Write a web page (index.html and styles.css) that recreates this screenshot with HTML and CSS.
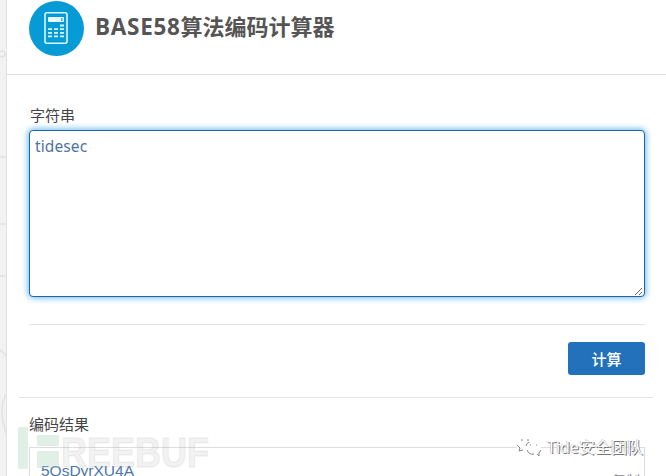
FILE: index.html
```html
<!DOCTYPE html>
<html lang="zh-CN">
<head>
<meta charset="utf-8">
<title>BASE58算法编码计算器</title>
<link rel="stylesheet" href="styles.css">
</head>
<body>
<div class="page">
  <aside class="rail">
    <svg width="7" height="476" viewBox="0 0 7 476" fill="none" stroke="#e2e2e2" stroke-width="1.5">
      <circle cx="2" cy="54" r="3"/><path d="M0 157h7M0 224h7M0 276h7M0 350q4 2 7 8M7 393q-5 8-5 18t5 26"/>
    </svg>
  </aside>
  <main class="panel">
    <header class="head">
      <svg class="logo" width="55" height="55" viewBox="0 0 55 55">
        <circle cx="27.5" cy="27.5" r="27.5" fill="#069bd5"/>
        <rect x="16" y="11.8" width="22" height="30.5" rx="2" fill="none" stroke="#d9f8ff" stroke-width="1.6"/>
        <rect x="19" y="16" width="16" height="5" rx="1" fill="#e8fbff"/>
        <path d="M32.8 17v3" stroke="#069bd5" stroke-width="1.2"/>
        <path d="M31 24.5h4M19 28.2h4m2 0h4m2 0h4M19 31.8h4m2 0h4m2 0h4M19 35.4h4m2 0h4m2 0h4" stroke="#d9f8ff" stroke-width="1.8"/>
      </svg>
      <h1 class="title"><span class="title-latin">BASE58</span>算法编码计算器</h1>
    </header>
    <section class="form">
      <label class="label" for="source">字符串</label>
      <div class="field">
        <textarea class="input" id="source" spellcheck="false">tidesec</textarea>
        <svg class="grip" width="9" height="9" viewBox="0 0 9 9" stroke="#666" stroke-width="1"><path d="M1 8L8 1M5 8L8 5"/></svg>
      </div>
      <div class="actions"><button class="button" type="button">计算</button></div>
    </section>
    <section class="result">
      <div class="label">编码结果</div>
      <div class="output"><span class="value">5QsDyrXU4A</span><span class="copy">复制</span></div>
    </section>
  </main>
  <svg class="mark" width="194" height="44" viewBox="0 0 194 44">
    <path fill="#a9d5bd" fill-opacity=".36" d="M0 0h10v42H0zM19 8h22v11H19zM19 24h22v17H19z"/>
    <text class="mark-text" x="43" y="40" textLength="148" lengthAdjust="spacingAndGlyphs">REEBUF</text>
  </svg>
  <div class="credit">
    <svg width="28" height="24" viewBox="0 0 28 24" fill="#fff" stroke="#888" stroke-width="1">
      <path stroke="none" d="M10 1C-1 1-1 13 5 17l7-2c1 5 7 6 11 4 6-4 3-12-4-11 0-4-4-7-9-7z"/>
      <path fill="none" d="M2 10l3 3-1 3 4-1M11 11q0-2 3-4M12 15q2 5 7 4M22 19l2 2v-3l2-3"/>
      <path d="M6 5h2m4 0h2m1 5h1m5 0h1"/>
    </svg>
    <span>Tide安全团队</span>
  </div>
</div>
</body>
</html>
```

FILE: styles.css
```css
* { box-sizing: border-box; }
body {
  margin: 0;
  overflow: hidden;
  color: #444;
  font-family: "Noto Sans", "Noto Sans CJK SC", sans-serif;
}
.page {
  position: relative;
  display: flex;
  width: 666px;
  height: 476px;
  overflow: hidden;
  background: #fff;
}
.rail { flex: 0 0 7px; min-width: 0; overflow: hidden; background: #f2f2f2; border-right: 1px solid #e2e2e2; }
.panel { flex: 1; min-width: 0; }
.head {
  display: flex;
  height: 75px;
  padding: 1px 0 0 22px;
  border-bottom: 1px solid #dedede;
}
.logo { flex: none; }
.title {
  margin: 8px 0 0 11px;
  color: #555;
  font: bold 22px/32px "Noto Sans CJK SC", sans-serif;
  white-space: nowrap;
}
.title-latin { font-family: "Open Sans", sans-serif; font-size: 22.5px; letter-spacing: .7px; }
.form { padding: 30px 21px 0 22px; }
.form .label { padding-left: 1px; }
.label { display: block; height: 25px; font-size: 15px; line-height: 20px; }
.field { position: relative; height: 167px; }
.input {
  display: block;
  width: 100%;
  height: 100%;
  padding: 4px 5px;
  border: 1px solid #22659f;
  border-radius: 4px;
  outline: 0;
  box-shadow: 0 0 6px 1px #63b7f0;
  color: #4f72a5;
  font: 15.5px/22px "Noto Sans", sans-serif;
  letter-spacing: .1px;
  resize: none;
}
.grip { position: absolute; right: 2px; bottom: 1px; }
.actions {
  display: flex;
  justify-content: flex-end;
  margin-top: 27px;
  padding-top: 17px;
  border-top: 1px solid #e2e2e2;
}
.button {
  width: 77px;
  height: 33px;
  padding: 0;
  border: 0;
  border-radius: 3px;
  background: #2471bb;
  color: #fff;
  font: 500 15px/33px "Noto Sans CJK SC", sans-serif;
}
.result {
  margin: 22px 13px 0 12px;
  padding: 16px 8px 0 10px;
  border-top: 1px solid #e5e5e5;
}
.result .label { height: 33px; }
.output {
  display: flex;
  justify-content: space-between;
  height: 60px;
  padding: 13px 4px 0 11px;
  border: 1px solid #ddd;
}
.value { color: #4a76ad; font: 15.5px/20px "Liberation Sans", sans-serif; }
.copy { padding-top: 10px; color: #888; font-size: 14px; line-height: 20px; }
.mark { position: absolute; left: 18px; top: 427px; }
.mark-text {
  fill: #999;
  fill-opacity: .15;
  stroke: #999;
  stroke-opacity: .1;
  stroke-width: 2px;
  font: bold 43px "Liberation Sans", sans-serif;
}
.credit {
  position: absolute;
  left: 515px;
  top: 435px;
  display: flex;
  gap: 4px;
  color: #fff;
  font-size: 16px;
  line-height: 24px;
  white-space: nowrap;
  text-shadow: 1px 1px 0 #777, -.5px -.5px 0 #aaa;
}
```
